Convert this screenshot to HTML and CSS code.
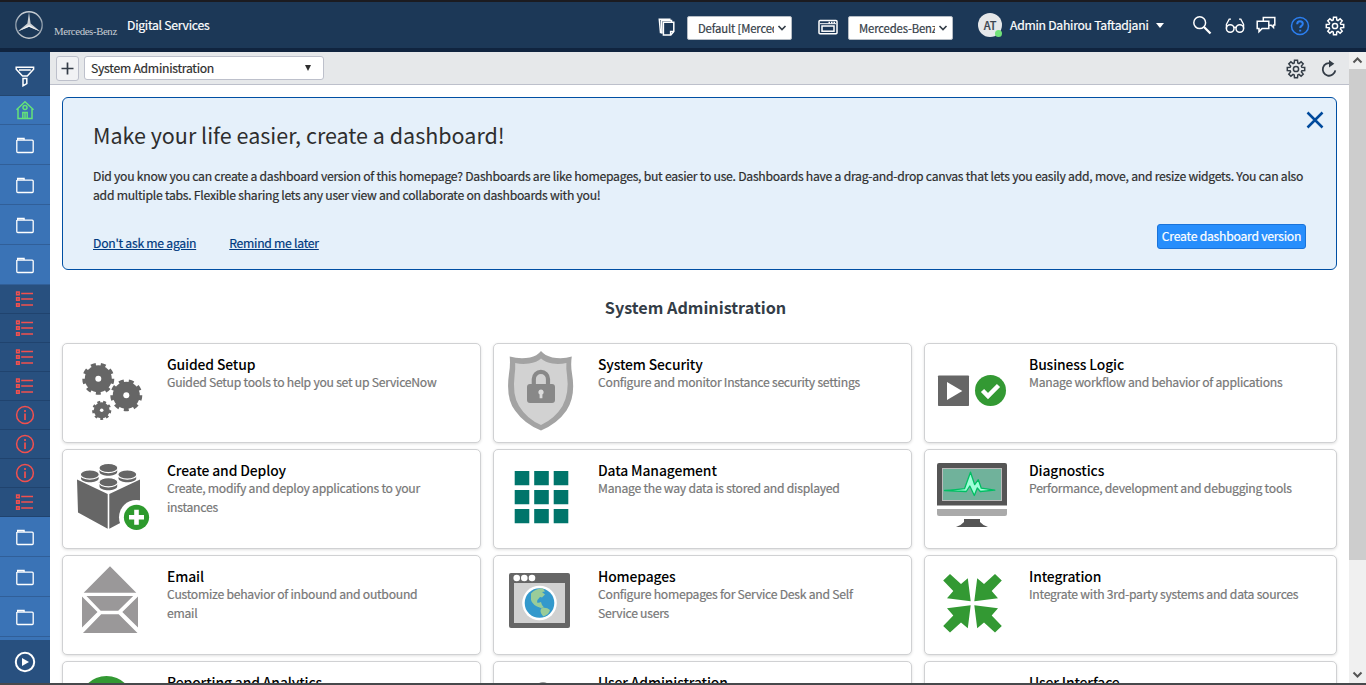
FILE: index.html
```html
<!DOCTYPE html>
<html lang="en">
<head>
<meta charset="utf-8">
<title>System Administration</title>
<link rel="stylesheet" href="styles.css">
</head>
<body>
<svg class="defs" width="0" height="0">
  <defs>
    <symbol id="folder" viewBox="0 0 20 20"><path d="M1.8 5V16.500q0 1 1 1h14.400q1 0 1-1V6.200q0-1-1-1H9.100V3.500H2.600V5.200h6.500"/></symbol>
    <symbol id="list" viewBox="0 0 20 20"><path d="M1.6 3.1h2.6v2.6H1.6zM1.6 8.7h2.6v2.6H1.6zM1.6 14.7h2.6v2.6H1.6zM6.2 4.4H18M6.2 10H18M6.2 16H18"/></symbol>
    <symbol id="info" viewBox="0 0 20 20"><circle cx="10" cy="10" r="8.4"/><path d="M10 8.4V15M10 5v2" stroke-width="1.7"/></symbol>
    <symbol id="gear" viewBox="-10 -10 20 20"><path d="M5.9-1.8 8.700-1.500v3L5.9 1.8 5.4 2.94 7.200 5.100 5.100 7.200 2.94 5.4 1.8 5.9 1.5 8.700h-3L-1.8 5.9-2.94 5.4-5.100 7.200-7.200 5.100-5.4 2.94-5.9 1.8-8.700 1.5v-3L-5.9-1.8-5.4-2.94-7.200-5.100-5.100-7.200-2.94-5.4-1.8-5.9-1.5-8.700h3L1.8-5.9 2.94-5.4 5.100-7.200 7.200-5.100 5.4-2.94z"/><circle r="2.6"/></symbol>
    <symbol id="chevron" viewBox="0 0 10 8"><path d="m1.500 2 3.500 3.600L8.500 2"/></symbol>
    <linearGradient id="silver" x1="0" y1="0" x2="0" y2="1"><stop offset="0" stop-color="#ccd2d8"/><stop offset=".5" stop-color="#8494a4"/><stop offset="1" stop-color="#c4c8cc"/></linearGradient>
  </defs>
</svg>
<div class="app">
  <header class="header">
    <svg class="star" viewBox="0 0 30 30"><circle cx="15" cy="15" r="13.2" fill="none" stroke="url(#silver)" stroke-width="1.4"/><path d="M15 2 16.6 13.6 26.3 21.4 15 16.8 3.7 21.4 13.4 13.6z" fill="#c9ced3"/><path d="M15 2v13l11.3 6.4L15 16.8 3.7 21.4 15 15z" fill="#f4f4f4"/></svg>
    <span class="wordmark">Mercedes-Benz</span>
    <span class="product">Digital Services</span>
    <svg class="ico pages" viewBox="0 0 20 20"><path d="M5 15.5H3.500L2.300 2.200h10.500v1.400M5 16.6 4.500 3.600h10v1.600"/><path d="M6.4 5.2h10.4v9.3l-3 3.600H6.400z"/><path d="M13.6 18v-3.600h3.200"/></svg>
    <span class="picker picker-set"><b>Default [Merced</b><svg><use href="#chevron"/></svg></span>
    <svg class="ico window" viewBox="0 0 20 20"><rect x="1" y="3.6" width="18" height="13.2" rx="1"/><rect x="4" y="9" width="12" height="5.2"/><path d="M2 6.7h16" stroke-width="1"/><path d="M10.5 5.6h1.5m1 0h1.5m1 0H17" stroke-width="1.8"/></svg>
    <span class="picker picker-app"><b>Mercedes-Benz</b><svg><use href="#chevron"/></svg></span>
    <span class="avatar">AT<i></i></span>
    <span class="user">Admin Dahirou Taftadjani</span>
    <span class="caret"></span>
    <svg class="ico search" viewBox="0 0 20 20"><circle cx="7.7" cy="7.7" r="5.9"/><path d="m12 12 6.500 6.500" stroke-width="2.3"/></svg>
    <svg class="ico glasses" viewBox="0 0 20 20"><circle cx="5.2" cy="13.500" r="3.800"/><circle cx="14.800" cy="13.500" r="3.800"/><path d="M8.800 12.700q1.200-1 2.400 0M1.400 13.500V9.500L4.200 4.200h1.800M18.600 13.500V9.500L15.800 4.200H14" stroke-width="1.300"/></svg>
    <svg class="ico chat" viewBox="0 0 20 20"><path d="M1.200 6.200h11.600v7.400H6l-3 3v-3H1.200z"/><path d="M7.300 6V2.500h11.500v7.400h-1.300v2.600l-2.200-2.200h-2.400"/></svg>
    <svg class="ico help" viewBox="0 0 20 20"><circle cx="10" cy="10" r="8.500"/><path d="M7.200 8.200c0-2 1.200-3 2.800-3s2.800 1 2.800 2.600c0 2.200-2.600 2-2.600 4.200M10.200 13.700v1.800" stroke-width="2"/></svg>
    <svg class="ico cog"><use href="#gear"/></svg>
  </header>
  <div class="main">
    <nav class="rail">
      <div class="cell filter"><svg viewBox="0 0 20 22"><path d="M1.200 2.200h17.400v2L12.300 11H7.500L1.200 4.200zM4 5h11.800M8 13.600h3.800v5L8 20.800z"/></svg></div>
      <div class="cell home"><svg viewBox="0 0 20 20"><path d="m1.500 9.800 8.500-8 8.500 8M3 9v9.400h14V9M7.800 18v-5.600h4.400V18M10 12.500V18"/><circle cx="10" cy="7.400" r="2"/></svg></div>
      <div class="cell folder"><svg><use href="#folder"/></svg></div>
      <div class="cell folder"><svg><use href="#folder"/></svg></div>
      <div class="cell folder"><svg><use href="#folder"/></svg></div>
      <div class="cell folder"><svg><use href="#folder"/></svg></div>
      <div class="cell entry"><svg><use href="#list"/></svg></div>
      <div class="cell entry"><svg><use href="#list"/></svg></div>
      <div class="cell entry"><svg><use href="#list"/></svg></div>
      <div class="cell entry"><svg><use href="#list"/></svg></div>
      <div class="cell entry"><svg><use href="#info"/></svg></div>
      <div class="cell entry"><svg><use href="#info"/></svg></div>
      <div class="cell entry"><svg><use href="#info"/></svg></div>
      <div class="cell entry"><svg><use href="#list"/></svg></div>
      <div class="cell folder"><svg><use href="#folder"/></svg></div>
      <div class="cell folder"><svg><use href="#folder"/></svg></div>
      <div class="cell folder"><svg><use href="#folder"/></svg></div>
      <div class="cell play"><svg viewBox="0 0 22 22"><circle cx="11" cy="11" r="9.200"/><path d="m8 7 7 4-7 4z" fill="#fff" stroke="none"/></svg></div>
    </nav>
    <section class="content">
      <div class="toolbar">
        <span class="add"><svg viewBox="0 0 13 13"><path d="M6.500.5v12M.5 6.500h12"/></svg></span>
        <span class="page-select">System Administration<i></i></span>
        <svg class="tool"><use href="#gear"/></svg>
        <svg class="tool refresh" viewBox="0 0 20 20"><path d="M12.500 4.600A6.300 6.300 0 1 0 16.300 11.300" stroke-width="1.800"/><path d="m10 1 5.300 3.700-5.300 3.700z" fill="#343d47" stroke="none"/></svg>
      </div>
      <div class="page">
        <div class="banner">
          <svg class="close" viewBox="0 0 18 18"><path d="m1.500 1.500 15 15m0-15-15 15"/></svg>
          <h2>Make your life easier, create a dashboard!</h2>
          <p><span>Did you know you can create a dashboard version of this homepage? Dashboards are like homepages, but easier to use. Dashboards have a drag-and-drop canvas that lets you easily add, move, and resize widgets. You can also</span><br><span>add multiple tabs. Flexible sharing lets any user view and collaborate on dashboards with you!</span></p>
          <div class="actions"><a>Don't ask me again</a><a>Remind me later</a><button>Create dashboard version</button></div>
        </div>
        <h1>System Administration</h1>
        <div class="cards">
          <article class="card">
            <svg viewBox="63 344 104 98"><g fill="#666"><circle cx="98.3" cy="378.7" r="13.500"/><circle cx="126.3" cy="395.3" r="13.500"/><circle cx="101.7" cy="410.3" r="8"/></g><g fill="none" stroke="#666"><circle cx="98.3" cy="378.7" r="13.800" stroke-width="4.400" pathLength="18" stroke-dasharray="1"/><circle cx="126.3" cy="395.3" r="13.800" stroke-width="4.400" pathLength="18" stroke-dasharray="1"/><circle cx="101.7" cy="410.3" r="8" stroke-width="3.200" pathLength="18" stroke-dasharray="1"/></g><g fill="#fff"><circle cx="98.3" cy="378.7" r="3"/><circle cx="126.3" cy="395.3" r="3"/><circle cx="101.7" cy="410.3" r="1.800"/></g></svg>
            <div><h3>Guided Setup</h3><p>Guided Setup tools to help you set up ServiceNow</p></div>
          </article>
          <article class="card">
            <svg viewBox="494 344 104 98"><path d="M541 351q-4 5-11 6.500-10 2-20.300-1 .8 8-.7 17-3.500 25 6 37 9.500 13.500 26 20 16.500-7 25.500-20 9.500-14 5.500-37-1.500-9-.2-17-9 3-19.500 1-7.500-2-11.300-6.500z" fill="#a3a3a3"/><path d="M541 358.500q-4 4-12 5-7 1-13.800-.5.300 5-.6 12-2.500 20 4.400 31 8 13 22 19 14-6.500 21.500-19 7-13 4.500-31-1-7-.6-12-7 1.500-14 .5-7-1-11.400-5z" fill="#d2d2d2"/><path d="M533.800 386v-7a7 7 0 0 1 14.200 0v7" fill="none" stroke="#888" stroke-width="4.200"/><rect x="527" y="384" width="28" height="19" rx="3" fill="#888"/><path d="M541 389.500a2.700 2.700 0 0 1 1.400 5v3.800h-2.800v-3.800a2.700 2.700 0 0 1 1.400-5z" fill="#ddd"/></svg>
            <div><h3>System Security</h3><p>Configure and monitor Instance security settings</p></div>
          </article>
          <article class="card">
            <svg viewBox="925 344 104 98"><rect x="938" y="375.500" width="31" height="30.500" rx=".8" fill="#666"/><path d="m947 382 15.300 9-15.300 9z" fill="#fff"/><circle cx="990.500" cy="390.500" r="15.500" fill="#393"/><path d="m982.500 390.500 5.500 5.500 10.500-10.500" fill="none" stroke="#fff" stroke-width="4.500"/></svg>
            <div><h3>Business Logic</h3><p>Manage workflow and behavior of applications</p></div>
          </article>
          <article class="card">
            <svg viewBox="63 450 104 98"><g fill="#666"><path d="m77 479.500 30.700 14.500v34.800L78 512.500zM109.300 494 140 479.500v33l-30.700 16.300z"/><path d="M99.500 468.500v3.500c1 5 16.700 5 17.700 0v-3.500zM81 475v3.500c1 5 16.700 5 17.700 0V475zM118.500 475v3.500c1 5 16.700 5 17.700 0V475zM99.500 483v3.500c1 5 16.700 5 17.700 0V483z"/></g><g fill="#666" stroke="#fff" stroke-width="1.200"><ellipse cx="108.400" cy="468" rx="9.500" ry="4.600"/><ellipse cx="89.800" cy="474.500" rx="9.500" ry="4.600"/><ellipse cx="127.300" cy="474.500" rx="9.500" ry="4.600"/><ellipse cx="108.400" cy="482.300" rx="9.500" ry="4.600"/></g><circle cx="136.300" cy="517.300" r="17.300" fill="#fff"/><circle cx="136.500" cy="517.300" r="12.600" fill="#2d9a2d"/><path d="M136.500 509.800v15M129 517.300h15" stroke="#fff" stroke-width="4.600"/></svg>
            <div><h3>Create and Deploy</h3><p>Create, modify and deploy applications to your<br>instances</p></div>
          </article>
          <article class="card">
            <svg viewBox="494 450 104 98"><g fill="#00756b"><path d="M514.700 471h14.600v14.300h-14.600zM534.200 471h14.600v14.300h-14.600zM553.700 471h14.600v14.300h-14.600zM514.700 490h14.600v14.300h-14.600zM534.200 490h14.600v14.300h-14.600zM553.700 490h14.600v14.300h-14.600zM514.700 509h14.600v14.300h-14.600zM534.200 509h14.600v14.300h-14.600zM553.700 509h14.600v14.300h-14.600z"/></g></svg>
            <div><h3>Data Management</h3><p>Manage the way data is stored and displayed</p></div>
          </article>
          <article class="card">
            <svg viewBox="925 450 104 98"><path d="M937 505.500V465q0-2 2-2h66q2 0 2 2v40.500z" fill="#555"/><rect x="942.500" y="468.500" width="59" height="32" fill="#70b29b" stroke="#bbb"/><path d="M944.500 490.500q12-.5 20-1.800l6-16.500 4.200 12.500 3.600-5 3 8.500 13.500 2-14.500 1.300-3-3.500-3 7.500-4.500-9.500-3.500 5.500z" fill="#9fffd8" stroke="#00bf63" stroke-width="1.300" stroke-linejoin="round"/><path d="M937 509h70v5q0 2-2 2h-66q-2 0-2-2z" fill="#aaa"/><path d="M964 519h16v3q3 3.500 8 5h-32q5-1.500 8-5z" fill="#555"/></svg>
            <div><h3>Diagnostics</h3><p>Performance, development and debugging tools</p></div>
          </article>
          <article class="card">
            <svg viewBox="63 556 104 98"><g fill="#9a9899"><path d="M110 566.200 136.300 592.700H83.700zM86.500 596h46.700l-15 14.700h-17.500zM82 596.500l15.500 15.500L82 627.500zM138 596.500 122.300 612 138 627.500zM83 633l18.200-18.800h17.500L137.500 633z"/></g></svg>
            <div><h3>Email</h3><p>Customize behavior of inbound and outbound<br>email</p></div>
          </article>
          <article class="card">
            <svg viewBox="494 556 104 98"><rect x="509" y="573" width="61" height="55" rx="2" fill="#666"/><path d="M514 583h51v40h-51z" fill="#d1d1d1"/><g fill="#fff"><circle cx="516.700" cy="578" r="3.300"/><circle cx="524.300" cy="578" r="3.300"/><circle cx="532" cy="578" r="3.300"/><circle cx="539.500" cy="603" r="17.300"/></g><circle cx="539.500" cy="603" r="14.800" fill="#39c"/><path d="M531 593.500q5-5.500 12-5l2 3-3 .5 3 2.500-3 3-2-.5q-3 2.500-3 5.500 2 .5 4-.5l1 3 2 2.500-3 .5q-9-3-10-8zM541 608.500q5-2 9 1.500-1 4.500-6.500 6.500-4-4-2.500-8z" fill="#9c9"/></svg>
            <div><h3>Homepages</h3><p>Configure homepages for Service Desk and Self<br>Service users</p></div>
          </article>
          <article class="card">
            <svg viewBox="925 556 104 98"><g fill="#393"><path id="arrow" d="m943.200 580.500 6.800-6.500 11 10 6.800-5.700 2.900 22.900-23.700-2.900 6.300-7.200z"/><use href="#arrow" transform="matrix(-1 0 0 1 1945 0)"/><use href="#arrow" transform="matrix(1 0 0 -1 0 1206.500)"/><use href="#arrow" transform="matrix(-1 0 0 -1 1945 1206.500)"/></g></svg>
            <div><h3>Integration</h3><p>Integrate with 3rd-party systems and data sources</p></div>
          </article>
          <article class="card">
            <svg viewBox="63 662 104 98"><circle cx="106.500" cy="703" r="27" fill="#393"/></svg>
            <div><h3>Reporting and Analytics</h3></div>
          </article>
          <article class="card">
            <svg viewBox="494 662 104 98"><circle cx="543" cy="689.500" r="7.500" fill="#999"/></svg>
            <div><h3>User Administration</h3></div>
          </article>
          <article class="card">
            <svg viewBox="925 662 104 98"></svg>
            <div><h3>User Interface</h3></div>
          </article>
        </div>
      </div>
    </section>
    <div class="scrollbar"><svg viewBox="0 0 17 17"><path d="m4.500 10.500 4-4 4 4"/></svg><div class="thumb"></div><svg viewBox="0 0 17 17"><path d="m4.500 6.500 4 4 4-4"/></svg></div>
  </div>
  <footer class="edge"></footer>
</div>
</body>
</html>
```
FILE: styles.css
```css
* { box-sizing: border-box; }
body { margin: 0; font-family: "Noto Sans CJK SC", "Noto Sans", sans-serif; font-size: 12.2px; letter-spacing: -.26px; -webkit-text-stroke: .2px; color: #2e2e2e; overflow: hidden; }
h1, h2, h3, p { margin: 0; }
h1, h2, h3, .wordmark { -webkit-text-stroke: 0; }
svg { display: block; flex: none; fill: none; }
.defs { position: absolute; }
.app { width: 1366px; height: 685px; display: flex; flex-direction: column; overflow: hidden; }

.header { flex: none; height: 52px; background: #1c3857; border-top: 2px solid #1b1b20; border-bottom: 4px solid #10243f; display: flex; align-items: center; color: #fff; white-space: nowrap; padding-left: 14px; }
.star { width: 30px; height: 30px; }
.wordmark { font: 10.8px "Liberation Serif", serif; letter-spacing: -.38px; color: #c8cdd4; width: 63px; margin: 12px 0 0 10px; }
.product { margin-left: 10px; width: 531px; }
.ico { width: 20px; height: 20px; stroke: #fff; stroke-width: 1.5; }
.picker { height: 24px; background: #fff; border: 1px solid #b5bcc4; border-radius: 2px; color: #343d47; display: flex; align-items: center; padding: 0 4px 0 10px; width: 105px; margin-top: 5px; font-size: 11.3px; }
.picker b { font-weight: 400; width: 76px; overflow: hidden; letter-spacing: -.15px; }
.picker svg { width: 10px; height: 8px; margin-left: 3px; stroke: #343d47; stroke-width: 1.6; }
.pages { margin: 4px 0 0 -1px; }
.picker-set { margin-left: 10px; }
.window { margin: 3px 0 0 26px; }
.picker-app { margin-left: 10px; }
.avatar { position: relative; width: 24px; height: 24px; margin-left: 25px; border-radius: 50%; background: #e6e8ea; color: #3a444e; font-size: 11px; font-weight: 500; line-height: 24px; text-align: center; }
.avatar i { position: absolute; right: 0; bottom: 0; width: 7px; height: 7px; border-radius: 50%; background: #71e279; }
.user { margin-left: 8px; width: 146px; }
.caret { border: 4px solid transparent; border-top: 5px solid #fff; border-bottom: 0; }
.search { margin-left: 28px; }
.glasses { margin-left: 13px; }
.chat { margin-left: 11px; }
.help { margin: 2px 0 0 14px; stroke: #2c7ff0; }
.cog { margin: 2px 0 0 15px; }

.main { flex: 1; min-height: 0; display: flex; }
.rail { width: 50px; flex: none; background: #3a73b6; }
.cell { display: flex; align-items: center; justify-content: center; border-bottom: 1px solid #315f98; stroke: #fff; stroke-width: 1.5; }
.cell svg { width: 20px; height: 20px; }
.filter { height: 44px; background: #28507f; border-color: #23466f; padding-top: 4px; }
.filter svg { height: 22px; }
.home { height: 29px; stroke: #64e27a; }
.folder { height: 40px; stroke-width: 1.3; }
.entry { height: 29px; background: #28507f; border-color: #20436e; stroke: #f2504e; }
.play { height: 43px; margin-top: 3px; background: #28507f; border: 0; stroke-width: 2; }
.play svg { width: 22px; height: 22px; }

.content { flex: 1; min-width: 0; overflow: hidden; }
.toolbar { height: 33px; background: #e6e8ea; border-bottom: 1px solid #bdc0cb; display: flex; align-items: center; padding-left: 6px; }
.add { width: 23px; height: 25px; border: 1px solid #bdc0cb; border-radius: 3px; background: #f1f2f4; display: flex; align-items: center; justify-content: center; }
.add svg { width: 13px; height: 13px; stroke: #343d47; stroke-width: 1.7; }
.page-select { width: 240px; height: 24px; margin: 0 962px 0 5px; padding: 0 12px 0 6px; background: #fff; border: 1px solid #bdc0cb; border-radius: 3px; display: flex; align-items: center; justify-content: space-between; }
.page-select i { border: 3.5px solid transparent; border-top: 6px solid #2e2e2e; border-bottom: 0; }
.tool { width: 20px; height: 20px; margin-top: 2px; stroke: #343d47; stroke-width: 1.5; }
.refresh { margin-left: 13px; }

.page { padding: 12px; }
.banner { position: relative; height: 173px; border: 1px solid #004fa3; border-radius: 6px; background: #e5f0fa; padding: 21px 30px 0; }
.banner h2 { font-weight: 400; font-size: 21.5px; letter-spacing: 0; line-height: 32px; }
.banner p { line-height: 19px; margin-top: 16px; white-space: nowrap; }
.close { position: absolute; right: 12px; top: 13px; width: 18px; height: 18px; stroke: #004a9c; stroke-width: 2.5; }
.actions { display: flex; align-items: center; margin-top: 18px; height: 26px; }
.actions a { color: #003a80; text-decoration: underline; margin: 14px 33px 0 0; }
.actions button { margin-left: auto; width: 149px; height: 25px; padding: 0; background: #278efc; border: 1px solid #1a73d9; border-radius: 3px; color: #fff; font: inherit; letter-spacing: -.24px; white-space: nowrap; }
.page h1 { font-size: 16.2px; line-height: 24px; font-weight: 700; letter-spacing: 0; text-align: center; color: #343d47; margin: 25px 0 24px; padding-right: 8px; }
.cards { display: grid; grid-template-columns: 419px 419px 413px; column-gap: 12px; row-gap: 6px; grid-auto-rows: 100px; }
.card { border: 1px solid #d0d1d3; border-radius: 5px; background: #fff; box-shadow: 0 1px 3px rgba(0, 0, 0, .13); display: flex; white-space: nowrap; overflow: hidden; }
.card > svg { width: 104px; height: 98px; }
.card h3 { color: #000; font-size: 13.9px; font-weight: 500; letter-spacing: -.13px; line-height: 18px; margin-top: 11px; }
.card p { color: #777; line-height: 19px; }

.scrollbar { width: 17px; flex: none; background: #f0f0f0; display: flex; flex-direction: column; justify-content: space-between; }
.scrollbar svg { width: 17px; height: 17px; stroke: #555; stroke-width: 2; }
.thumb { height: 491px; background: #cdcdcd; margin-bottom: auto; }
.edge { flex: none; height: 2px; background: #47494c; }
```
